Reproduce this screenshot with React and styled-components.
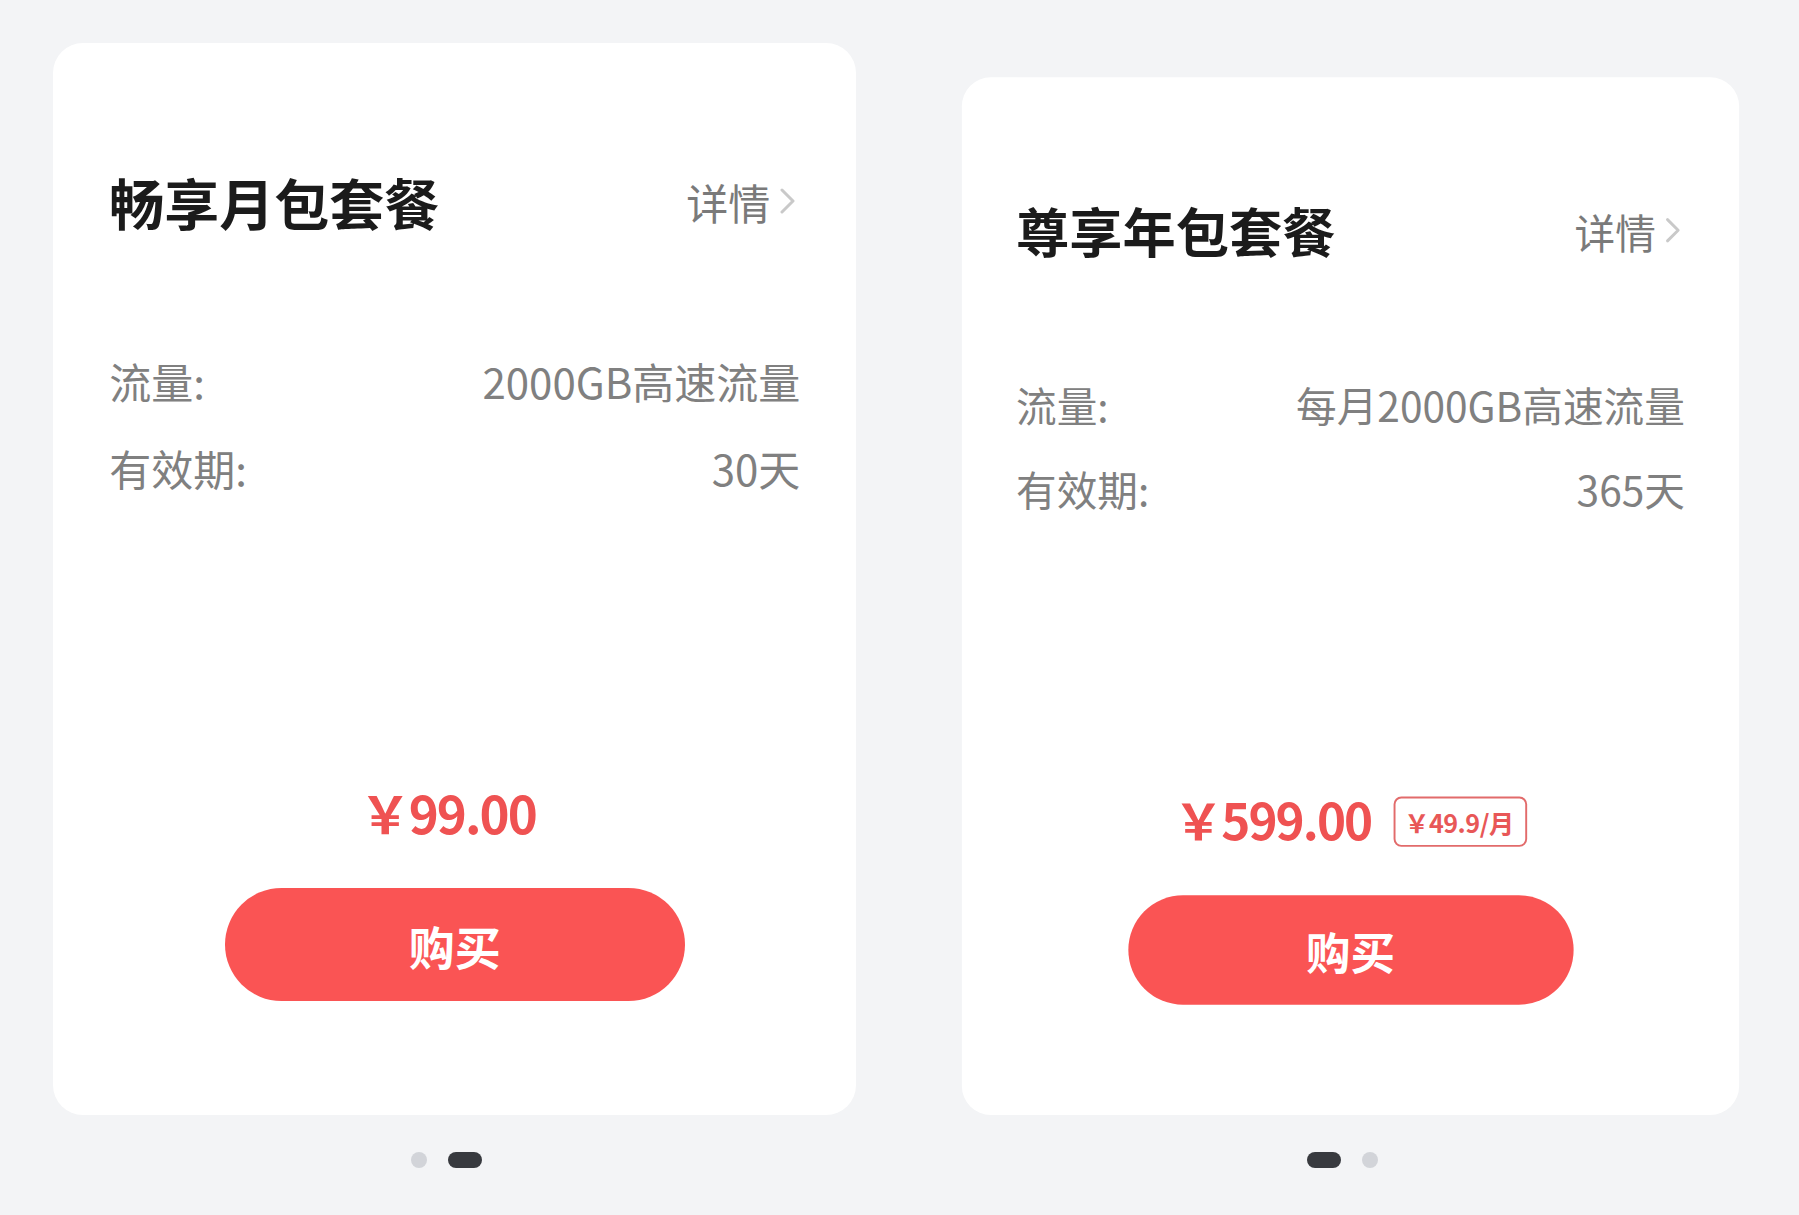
import React from 'react'
import styled, { createGlobalStyle } from 'styled-components'

const plans = [
  {
    title: '畅享月包套餐',
    rows: [
      ['流量:', '2000GB高速流量'],
      ['有效期:', '30天'],
    ],
    price: '￥99.00',
    active: 1,
    shift: 10,
  },
  {
    title: '尊享年包套餐',
    rows: [
      ['流量:', '每月2000GB高速流量'],
      ['有效期:', '365天'],
    ],
    price: '￥599.00',
    monthly: '￥49.9/月',
    scale: 0.968,
    active: 0,
    shift: 3,
  },
]

function Chevron() {
  return (
    <svg width="16" height="26" viewBox="0 0 16 26">
      <path d="M3 2 L14 13 L3 24" fill="none" stroke="#c9c9c9" strokeWidth="3" strokeLinecap="round" strokeLinejoin="round" />
    </svg>
  )
}

function PlanCard({ plan }) {
  return (
    <Pane>
      <Card $scale={plan.scale} $shift={plan.shift}>
        <Header>
          <Title>{plan.title}</Title>
          <Detail>
            <span>详情</span>
            <Chevron />
          </Detail>
        </Header>
        <InfoList>
          {plan.rows.map(([label, value]) => (
            <InfoRow key={label}>
              <span>{label}</span>
              <span>{value}</span>
            </InfoRow>
          ))}
        </InfoList>
        <Bottom>
          <PriceRow>
            <Price $solo={!plan.monthly}>{plan.price}</Price>
            {plan.monthly && <Badge>{plan.monthly}</Badge>}
          </PriceRow>
          <BuyButton>购买</BuyButton>
        </Bottom>
      </Card>
      <Dots $shift={plan.shift}>
        {[0, 1].map((i) => (
          <Dot key={i} $active={i === plan.active} />
        ))}
      </Dots>
    </Pane>
  )
}

export default function App() {
  return (
    <>
      <GlobalStyle />
      <Page>
        {plans.map((p) => (
          <PlanCard key={p.title} plan={p} />
        ))}
      </Page>
    </>
  )
}

const GlobalStyle = createGlobalStyle`
  body {
    margin: 0;
    background: #f3f4f6;
    font-family: "Noto Sans CJK SC", "Noto Sans", sans-serif;
  }
`

const Page = styled.div`
  display: grid;
  grid-template-columns: 1fr 1fr;
  min-height: 100vh;
  background: #f3f4f6;
`

const Pane = styled.section`
  display: flex;
  flex-direction: column;
  align-items: center;
  padding-top: 43px;
`

const Card = styled.div`
  box-sizing: border-box;
  width: 803px;
  height: 1072px;
  margin-left: ${(p) => p.$shift}px;
  padding: 125px 56px 114px;
  display: flex;
  flex-direction: column;
  background: #fff;
  border-radius: 30px;
  transform: scale(${(p) => p.$scale || 1});
  transform-origin: center bottom;
`

const Header = styled.div`
  display: flex;
  justify-content: space-between;
  align-items: center;
  height: 66px;
`

const Title = styled.h2`
  margin: 0;
  font-size: 55px;
  line-height: 66px;
  font-weight: 700;
  color: #1b1b1b;
`

const Detail = styled.div`
  display: flex;
  align-items: center;
  gap: 9px;
  margin-right: 5px;
  font-size: 42px;
  color: #7a7a7a;
`

const InfoList = styled.div`
  margin-top: 117px;
  display: flex;
  flex-direction: column;
  gap: 27px;
`

const InfoRow = styled.div`
  display: flex;
  justify-content: space-between;
  font-size: 42px;
  line-height: 60px;
  color: #808080;
`

const Bottom = styled.div`
  margin-top: auto;
  display: flex;
  flex-direction: column;
  align-items: center;
`

const PriceRow = styled.div`
  display: flex;
  align-items: center;
  gap: 23px;
`

const Price = styled.div`
  font-size: 51px;
  line-height: 52px;
  font-weight: 700;
  letter-spacing: -2px;
  margin-left: ${(p) => (p.$solo ? '-14px' : '0')};
  color: #ef5252;
`

const Badge = styled.div`
  box-sizing: border-box;
  height: 52px;
  margin-top: 6px;
  display: flex;
  align-items: center;
  padding: 0 12px 0 9px;
  border: 2px solid #e26b6b;
  border-radius: 8px;
  font-size: 26px;
  font-weight: 700;
  letter-spacing: -0.5px;
  color: #e85757;
`

const BuyButton = styled.button`
  margin-top: 50px;
  width: 460px;
  height: 113px;
  border: none;
  border-radius: 57px;
  background: #fa5454;
  color: #fff;
  font-family: inherit;
  font-size: 46px;
  font-weight: 700;
  cursor: pointer;
`

const Dots = styled.div`
  display: flex;
  align-items: center;
  gap: 21px;
  margin-top: 37px;
  margin-right: ${(p) => 16 - p.$shift}px;
`

const Dot = styled.span`
  width: ${(p) => (p.$active ? '34px' : '16px')};
  height: 16px;
  border-radius: 8px;
  background: ${(p) => (p.$active ? '#383a3f' : '#d2d4d9')};
`
